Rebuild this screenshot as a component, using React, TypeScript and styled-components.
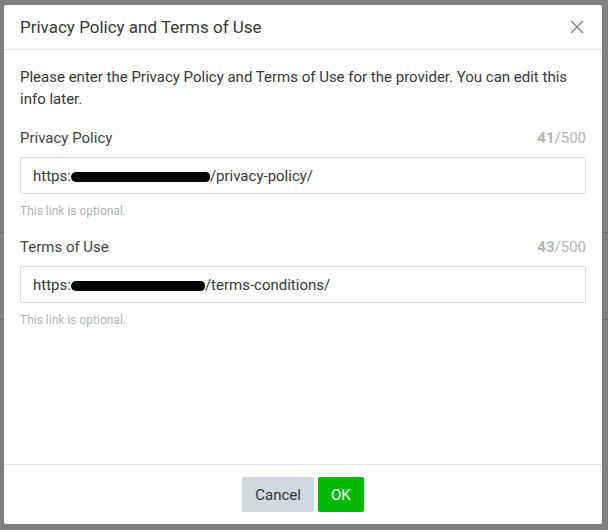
import styled, { createGlobalStyle } from "styled-components";

const GlobalStyle = createGlobalStyle`
  html, body {
    margin: 0;
    padding: 0;
  }
  body {
    font-family: Roboto, "Liberation Sans", Arial, sans-serif;
    background: #ffffff;
  }
`;

const Page = styled.div`
  position: relative;
  width: 608px;
  height: 530px;
  overflow: hidden;
  background: #ffffff;
`;

const PageContent = styled.div`
  display: flex;
  flex-direction: column;
  padding: 96px 0 0 0;
  color: #222;
`;

const PageRow = styled.div<{ $top: number }>`
  height: ${(p) => p.$top}px;
  border-bottom: 1px solid #d8d8d8;
`;

const Overlay = styled.div`
  position: absolute;
  inset: 0;
  background: rgba(0, 0, 0, 0.5);
  display: flex;
  padding: 5px 6px 6px 4px;
  box-sizing: border-box;
`;

const Modal = styled.div`
  flex: 1;
  background: #ffffff;
  border-radius: 2px;
  display: flex;
  flex-direction: column;
`;

const Header = styled.div`
  height: 44px;
  border-bottom: 1px solid #e9e9e9;
  display: flex;
  align-items: center;
  justify-content: space-between;
  padding: 0 16px;
`;

const Title = styled.h2`
  margin: 0;
  font-size: 17px;
  font-weight: 400;
  color: #383838;
`;

const CloseButton = styled.button`
  border: 0;
  background: none;
  padding: 0;
  width: 16px;
  height: 16px;
  display: flex;
  align-items: center;
  justify-content: center;
  cursor: pointer;
  margin-right: 1px;
`;

const Body = styled.div`
  flex: 1;
  padding: 16px 16px 0;
  display: flex;
  flex-direction: column;
`;

const Intro = styled.p`
  margin: 0 0 17px;
  font-size: 15px;
  line-height: 22px;
  color: #383838;
`;

const Field = styled.div`
  display: flex;
  flex-direction: column;
  margin-bottom: 17px;
`;

const LabelRow = styled.div`
  display: flex;
  justify-content: space-between;
  align-items: center;
  line-height: 22px;
  margin-bottom: 8px;
`;

const Label = styled.label`
  font-size: 15px;
  color: #444;
`;

const Counter = styled.span`
  font-size: 15px;
  color: #b5b5b5;
  b {
    font-weight: 700;
  }
`;

const InputBox = styled.div`
  height: 37px;
  box-sizing: border-box;
  border: 1px solid #dcdcdc;
  border-radius: 2px;
  padding: 0 12px;
  display: flex;
  align-items: center;
  font-size: 15px;
  color: #383838;
  white-space: nowrap;
`;

const Redacted = styled.span<{ $width: number }>`
  display: inline-block;
  width: ${(p) => p.$width}px;
  height: 10px;
  background: #000;
  border-radius: 6px 5px 5px 6px;
  margin-top: 2px;
`;

const Hint = styled.span`
  margin-top: 9px;
  font-size: 12px;
  line-height: 16px;
  color: #b3b3b3;
`;

const Footer = styled.div`
  height: 59px;
  border-top: 1px solid #e9e9e9;
  display: flex;
  align-items: center;
  justify-content: center;
  gap: 4px;
`;

const Button = styled.button<{ $primary?: boolean }>`
  height: 35px;
  border: 0;
  border-radius: 2px;
  padding: 0 13px;
  font-family: inherit;
  font-size: 15px;
  cursor: pointer;
  background: ${(p) => (p.$primary ? "#00b900" : "#d3d7de")};
  color: ${(p) => (p.$primary ? "#ffffff" : "#333")};
`;

const fields = [
  { label: "Privacy Policy", count: 41, path: "/privacy-policy/", mask: 139 },
  { label: "Terms of Use", count: 43, path: "/terms-conditions/", mask: 134 },
];

export default function App() {
  return (
    <>
      <GlobalStyle />
      <Page>
        <PageContent>
          <PageRow $top={136} />
          <PageRow $top={86} />
        </PageContent>
        <Overlay>
          <Modal>
            <Header>
              <Title>Privacy Policy and Terms of Use</Title>
              <CloseButton aria-label="Close">
                <svg width="14" height="14" viewBox="0 0 14 14">
                  <path
                    d="M1 1L13 13M13 1L1 13"
                    stroke="#8a8a8a"
                    strokeWidth="1.5"
                    fill="none"
                  />
                </svg>
              </CloseButton>
            </Header>
            <Body>
              <Intro>
                Please enter the Privacy Policy and Terms of Use for the
                provider. You can edit this info later.
              </Intro>
              {fields.map((f) => (
                <Field key={f.label}>
                  <LabelRow>
                    <Label>{f.label}</Label>
                    <Counter>
                      <b>{f.count}</b>/500
                    </Counter>
                  </LabelRow>
                  <InputBox>
                    https:
                    <Redacted $width={f.mask} />
                    {f.path}
                  </InputBox>
                  <Hint>This link is optional.</Hint>
                </Field>
              ))}
            </Body>
            <Footer>
              <Button>Cancel</Button>
              <Button $primary>OK</Button>
            </Footer>
          </Modal>
        </Overlay>
      </Page>
    </>
  );
}
